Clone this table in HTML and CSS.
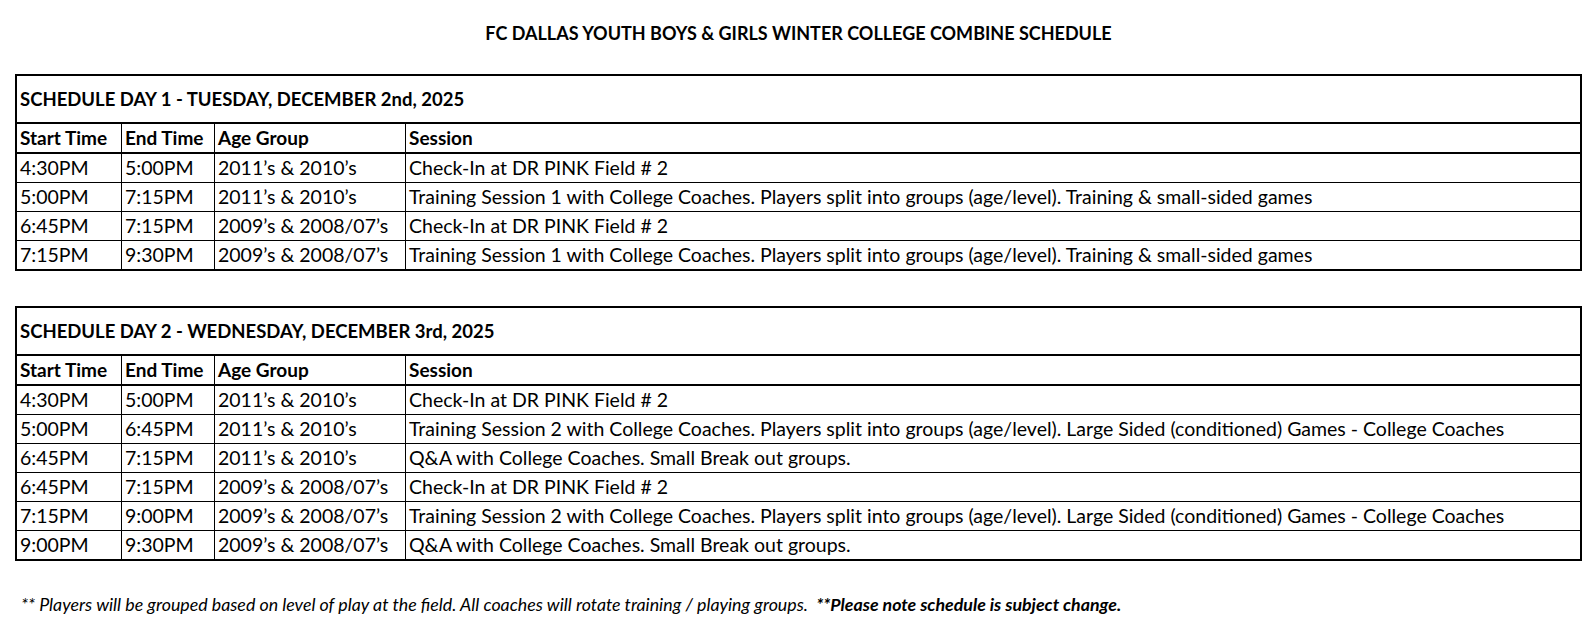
FILE: index.html
```html
<!DOCTYPE html>
<html lang="en">
<head>
<meta charset="utf-8">
<title>FC Dallas Youth Winter College Combine Schedule</title>
<link rel="stylesheet" href="styles.css">
</head>
<body>
<div class="page">
  <h1 class="page-title">FC DALLAS YOUTH BOYS &amp; GIRLS WINTER COLLEGE COMBINE SCHEDULE</h1>

  <table class="schedule">
    <colgroup>
      <col class="c-start"><col class="c-end"><col class="c-age"><col class="c-session">
    </colgroup>
    <tr class="day-row"><td colspan="4">SCHEDULE DAY 1 - TUESDAY, DECEMBER 2nd, 2025</td></tr>
    <tr class="head-row"><td>Start Time</td><td>End Time</td><td>Age Group</td><td>Session</td></tr>
    <tr><td>4:30PM</td><td>5:00PM</td><td>2011’s &amp; 2010’s</td><td>Check-In at DR PINK Field # 2</td></tr>
    <tr><td>5:00PM</td><td>7:15PM</td><td>2011’s &amp; 2010’s</td><td>Training Session 1 with College Coaches. Players split into groups (age/level). Training &amp; small-sided games</td></tr>
    <tr><td>6:45PM</td><td>7:15PM</td><td>2009’s &amp; 2008/07’s</td><td>Check-In at DR PINK Field # 2</td></tr>
    <tr class="last"><td>7:15PM</td><td>9:30PM</td><td>2009’s &amp; 2008/07’s</td><td>Training Session 1 with College Coaches. Players split into groups (age/level). Training &amp; small-sided games</td></tr>
  </table>

  <table class="schedule second">
    <colgroup>
      <col class="c-start"><col class="c-end"><col class="c-age"><col class="c-session">
    </colgroup>
    <tr class="day-row"><td colspan="4">SCHEDULE DAY 2 - WEDNESDAY, DECEMBER 3rd, 2025</td></tr>
    <tr class="head-row"><td>Start Time</td><td>End Time</td><td>Age Group</td><td>Session</td></tr>
    <tr><td>4:30PM</td><td>5:00PM</td><td>2011’s &amp; 2010’s</td><td>Check-In at DR PINK Field # 2</td></tr>
    <tr><td>5:00PM</td><td>6:45PM</td><td>2011’s &amp; 2010’s</td><td>Training Session 2 with College Coaches. Players split into groups (age/level). Large Sided (conditioned) Games - College Coaches</td></tr>
    <tr><td>6:45PM</td><td>7:15PM</td><td>2011’s &amp; 2010’s</td><td>Q&amp;A with College Coaches. Small Break out groups.</td></tr>
    <tr><td>6:45PM</td><td>7:15PM</td><td>2009’s &amp; 2008/07’s</td><td>Check-In at DR PINK Field # 2</td></tr>
    <tr><td>7:15PM</td><td>9:00PM</td><td>2009’s &amp; 2008/07’s</td><td>Training Session 2 with College Coaches. Players split into groups (age/level). Large Sided (conditioned) Games - College Coaches</td></tr>
    <tr class="last"><td>9:00PM</td><td>9:30PM</td><td>2009’s &amp; 2008/07’s</td><td>Q&amp;A with College Coaches. Small Break out groups.</td></tr>
  </table>

  <p class="note">** Players will be grouped based on level of play at the field. All coaches will rotate training / playing groups. &nbsp;<strong>**Please note schedule is subject change.</strong></p>
</div>
</body>
</html>
```

FILE: styles.css
```css
html, body {
  margin: 0;
  padding: 0;
  background: #ffffff;
}

.page {
  width: 1567px;
  padding: 21px 0 0 15px;
  font-family: Lato, "Liberation Sans", sans-serif;
  color: #000000;
}

.page-title {
  margin: 0 0 29px 0;
  height: 24px;
  line-height: 24px;
  font-size: 18px;
  font-weight: 700;
  text-align: center;
}

.schedule {
  width: 1567px;
  table-layout: fixed;
  border-collapse: separate;
  border-spacing: 0;
  border: 2px solid #000000;
  font-size: 19.5px;
}

.schedule.second {
  margin-top: 35px;
}

.c-start { width: 105px; }
.c-end { width: 93px; }
.c-age { width: 191px; }
.c-session { width: auto; }

.schedule td {
  box-sizing: border-box;
  height: 29px;
  padding: 0 0 0 3px;
  line-height: 22px;
  vertical-align: middle;
  white-space: nowrap;
  overflow: hidden;
  border-right: 1px solid #000000;
  border-bottom: 1px solid #000000;
}

.schedule td:last-child {
  border-right: none;
}

.schedule .day-row td {
  height: 48px;
  font-size: 18.5px;
  font-weight: 700;
  border-bottom: 2px solid #000000;
  border-right: none;
}

.schedule .head-row td {
  height: 30px;
  font-size: 19px;
  font-weight: 700;
  border-bottom: 2px solid #000000;
}

.schedule .last td {
  height: 28px;
  border-bottom: none;
}

.note {
  margin: 32px 0 0 6px;
  line-height: 22px;
  font-size: 17.8px;
  font-style: italic;
}

.note strong {
  font-weight: 700;
}
```
